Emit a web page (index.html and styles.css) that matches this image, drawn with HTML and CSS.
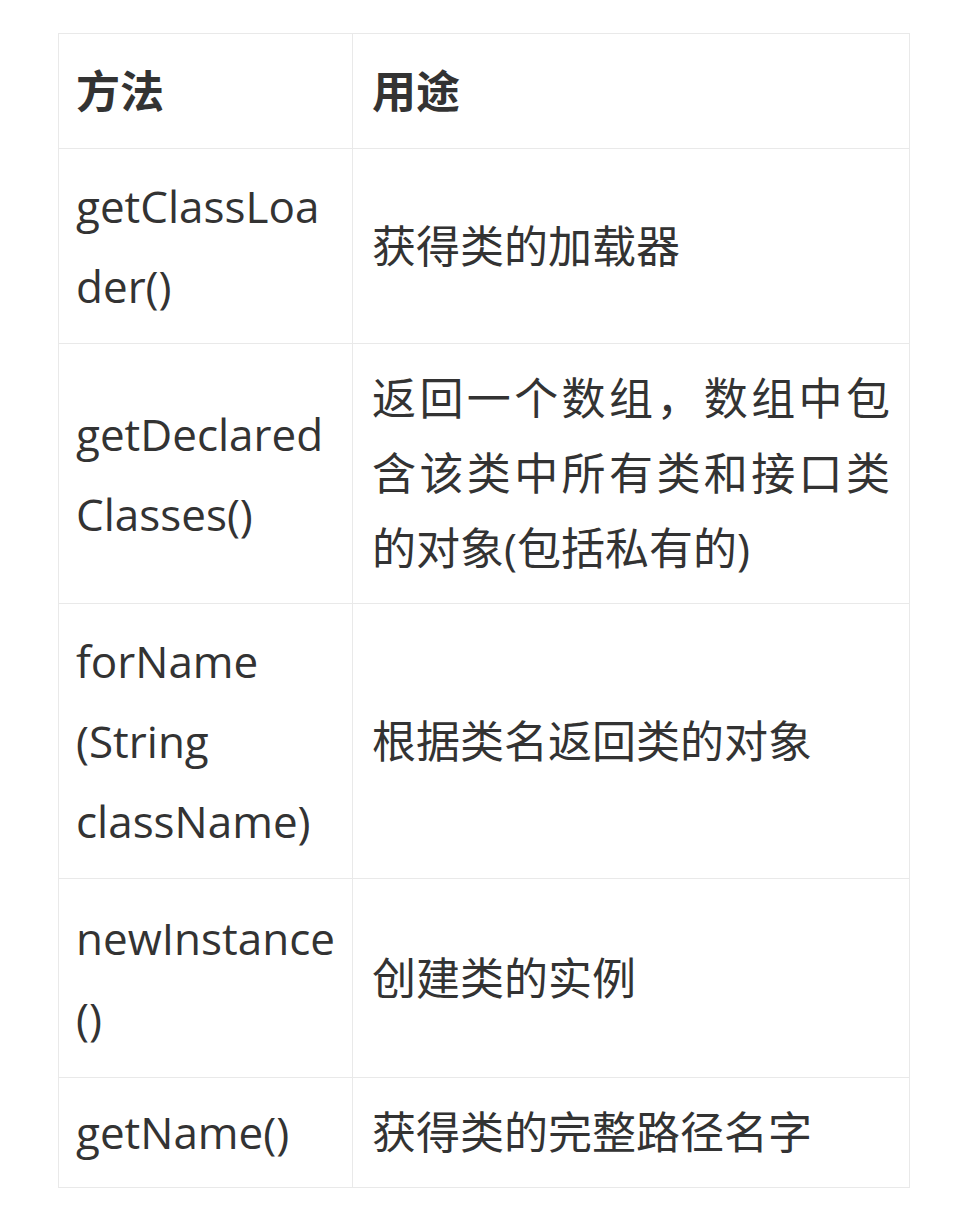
FILE: index.html
```html
<!DOCTYPE html>
<html lang="zh-CN">
<head>
<meta charset="utf-8">
<title>Class 方法</title>
<link rel="stylesheet" href="styles.css">
</head>
<body>
<div class="page">
  <table class="methods">
    <thead>
      <tr>
        <th class="col-method">方法</th>
        <th class="col-use">用途</th>
      </tr>
    </thead>
    <tbody>
      <tr>
        <td class="col-method">getClassLoa<br>der()</td>
        <td class="col-use">获得类的加载器</td>
      </tr>
      <tr>
        <td class="col-method">getDeclared<br>Classes()</td>
        <td class="col-use">返回一个数组，数组中包含该类中所有类和接口类的对象(包括私有的)</td>
      </tr>
      <tr>
        <td class="col-method">forName<br>(String<br>className)</td>
        <td class="col-use">根据类名返回类的对象</td>
      </tr>
      <tr class="row-tall">
        <td class="col-method">newInstance<br>()</td>
        <td class="col-use">创建类的实例</td>
      </tr>
      <tr class="row-short">
        <td class="col-method">getName()</td>
        <td class="col-use">获得类的完整路径名字</td>
      </tr>
    </tbody>
  </table>
</div>
</body>
</html>
```

FILE: styles.css
```css
html, body {
  margin: 0;
  padding: 0;
  background: #ffffff;
}

.page {
  padding: 33px 0 0 58px;
}

.methods {
  width: 852px;
  border-collapse: collapse;
  table-layout: fixed;
  font-family: "Open Sans", "Noto Sans CJK SC", sans-serif;
  font-size: 44px;
  color: #333333;
}

.methods th,
.methods td {
  border: 1px solid #e9e9e9;
  padding: 17px 19px 17px 17px;
  vertical-align: middle;
  text-align: left;
}

.methods th {
  font-weight: 700;
  line-height: 80px;
}

.methods .col-method {
  width: 257px;
  white-space: nowrap;
  line-height: 80px;
}

.methods td.col-use {
  line-height: 75px;
  text-align: justify;
  padding-left: 19px;
}

.methods th.col-use {
  padding-left: 19px;
}

.methods .row-tall td {
  padding-top: 19px;
  padding-bottom: 19px;
}

.methods .row-short td.col-method {
  line-height: 75px;
}
```
